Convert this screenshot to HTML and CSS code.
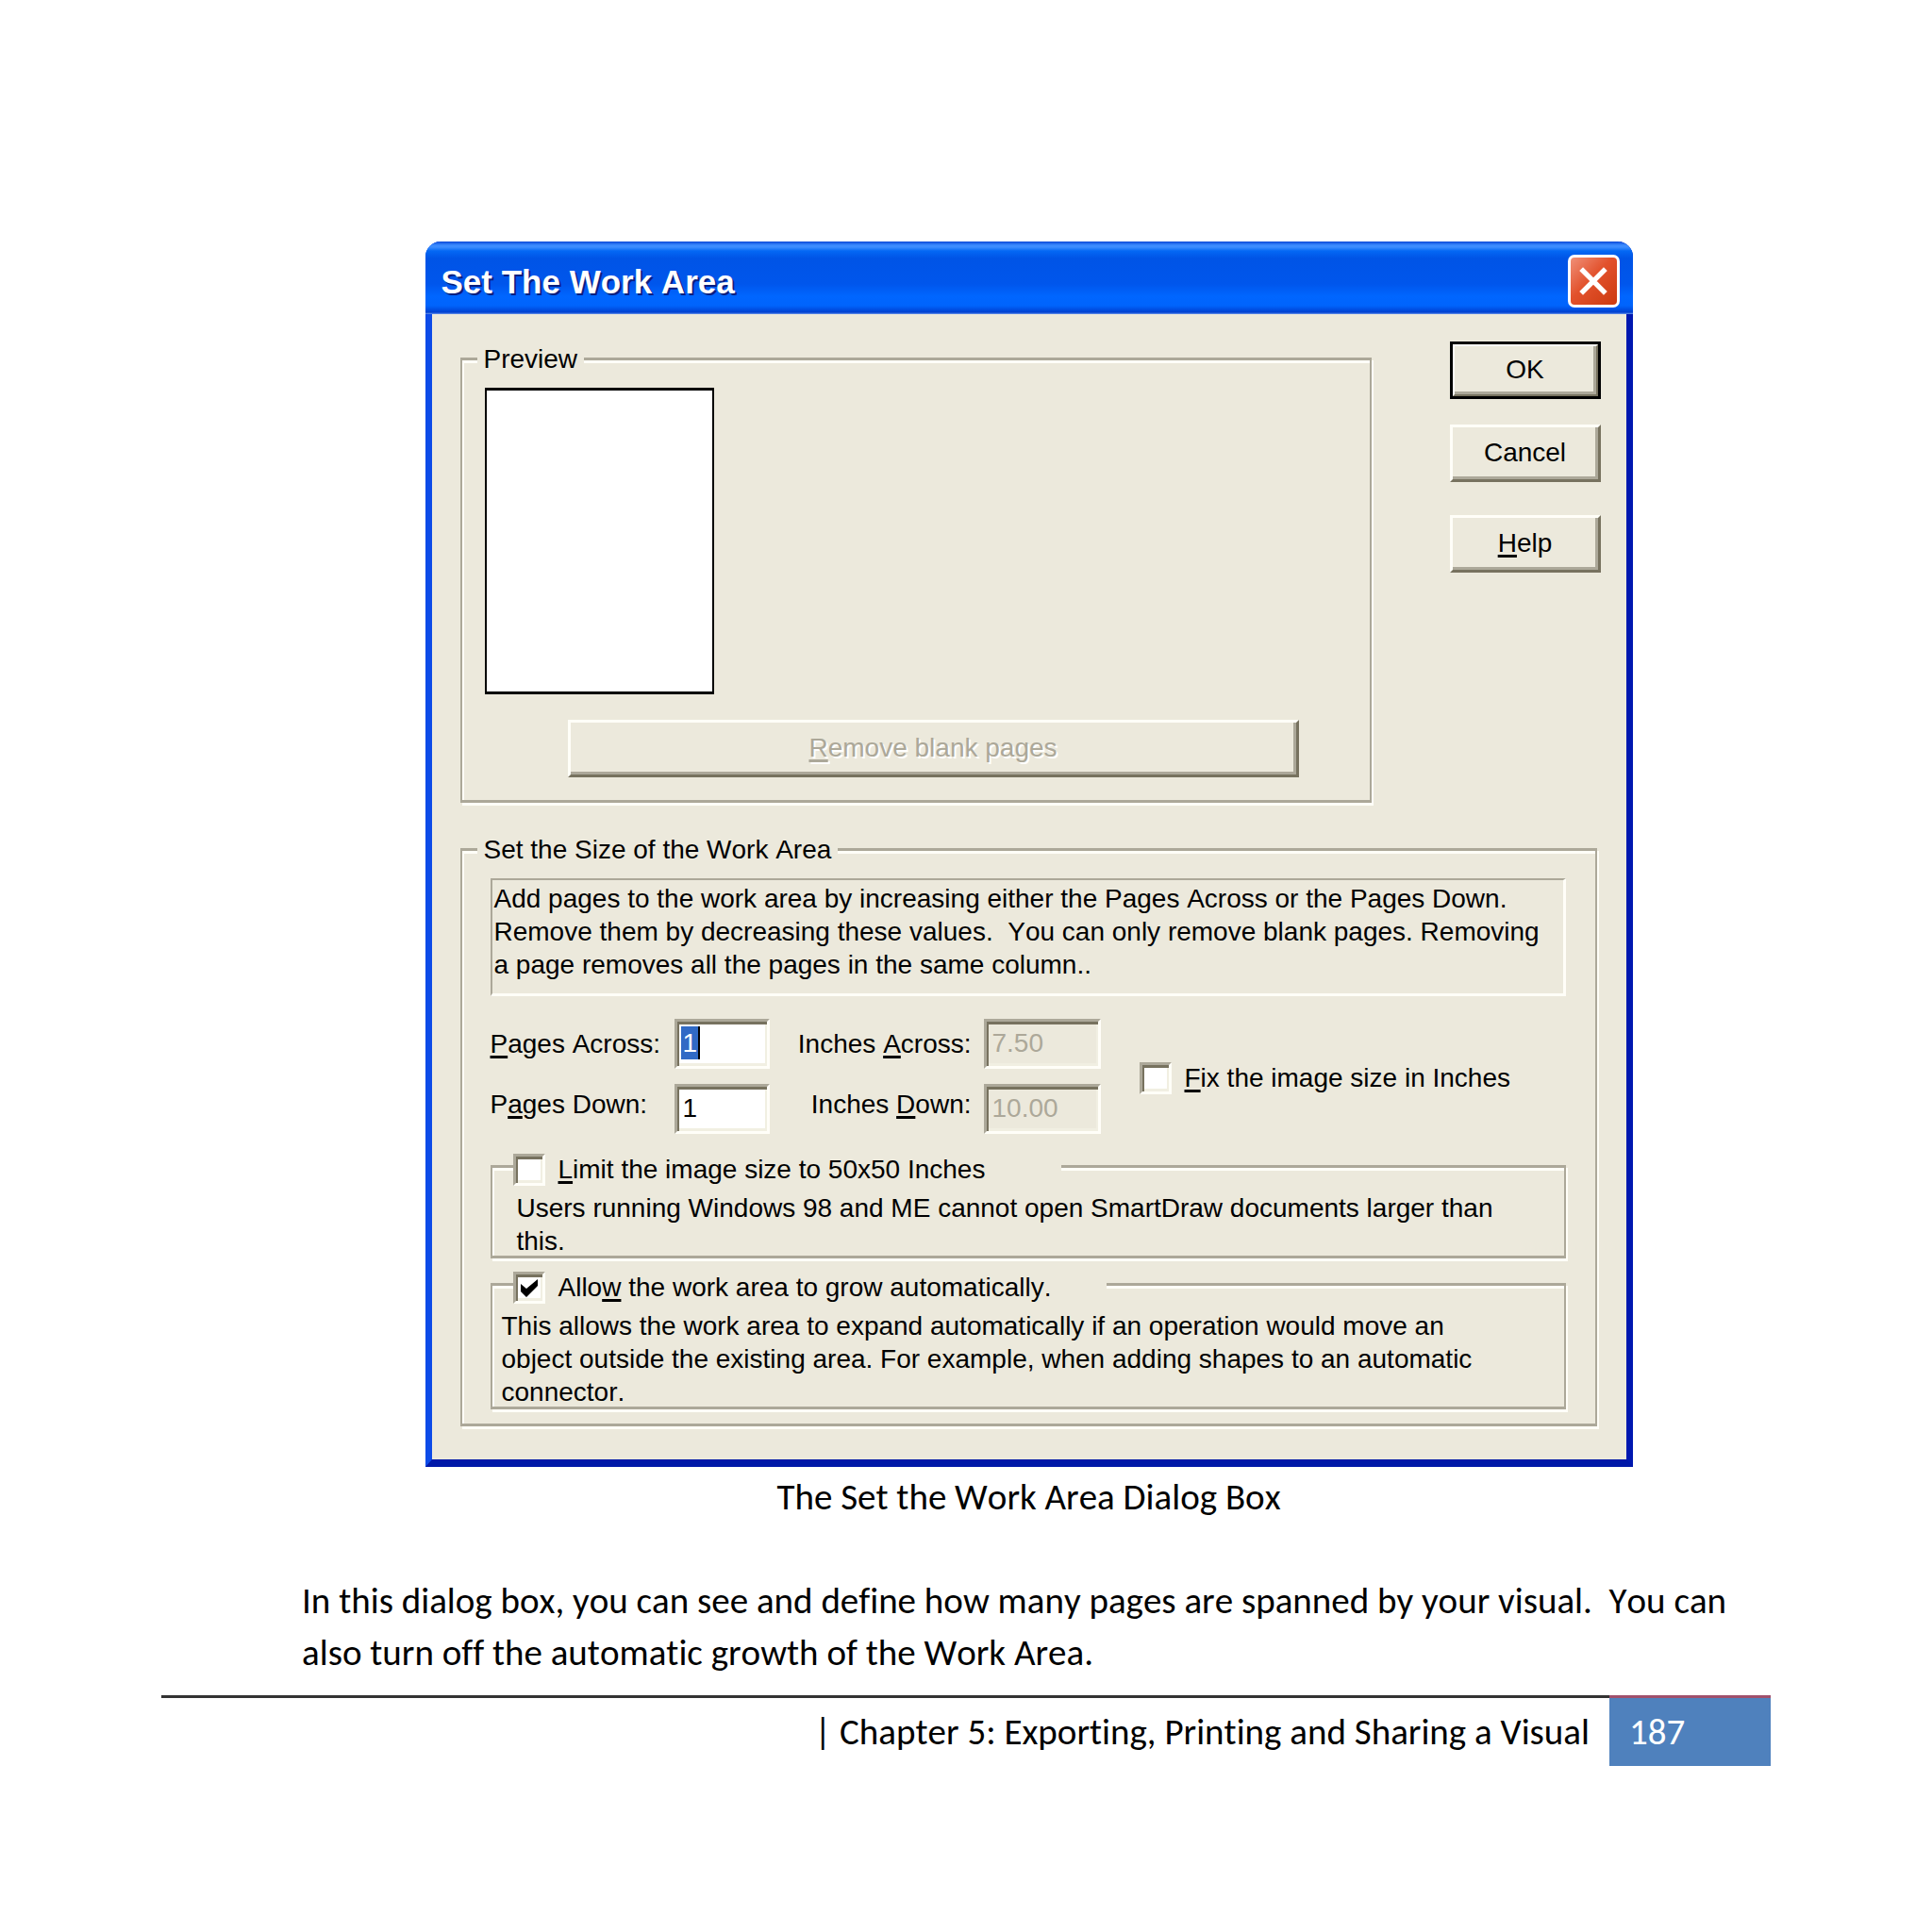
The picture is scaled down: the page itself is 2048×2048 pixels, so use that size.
FILE: index.html
```html
<!DOCTYPE html>
<html lang="en">
<head>
    <meta charset="UTF-8">
    <meta name="viewport" content="width=device-width, initial-scale=1.0">
    <title>Chapter 5: Exporting, Printing and Sharing a Visual</title>
    <link rel="stylesheet" href="styles.css">
</head>
<body>
    <main class="page">
        <figure class="figure">
            <section class="dialog">
                <header class="titlebar">
                    <h1>Set The Work Area</h1>
                    <button class="close" type="button" aria-label="Close">
                        <svg viewBox="0 0 28 28" width="30" height="30"><path d="M2 2L26 26M26 2L2 26" stroke="#fff" stroke-width="5"/></svg>
                    </button>
                </header>

                <form class="content">
                    <div class="top">
                        <fieldset class="group preview">
                            <legend>Preview</legend>
                            <div class="sheet"></div>
                            <button class="btn remove" type="button" disabled><u>R</u>emove blank pages</button>
                        </fieldset>
                        <div class="actions">
                            <button class="btn default" type="button">OK</button>
                            <button class="btn" type="button">Cancel</button>
                            <button class="btn help" type="button"><u>H</u>elp</button>
                        </div>
                    </div>

                    <fieldset class="group size">
                        <legend>Set the Size of the Work Area</legend>
                        <p class="info">Add pages to the work area by increasing either the Pages Across or the Pages Down.<br>Remove them by decreasing these values.&nbsp; You can only remove blank pages. Removing<br>a page removes all the pages in the same column..</p>

                        <div class="fields">
                            <div class="numbers">
                                <label for="pages-across"><u>P</u>ages Across:</label>
                                <input class="selected" id="pages-across" type="text" value="1">
                                <label class="right" for="inches-across">Inches <u>A</u>cross:</label>
                                <input id="inches-across" type="text" value="7.50" disabled>
                                <label class="down" for="pages-down">P<u>a</u>ges Down:</label>
                                <input id="pages-down" type="text" value="1">
                                <label class="right down" for="inches-down">Inches <u>D</u>own:</label>
                                <input id="inches-down" type="text" value="10.00" disabled>
                            </div>
                            <label class="check"><input type="checkbox"><span><u>F</u>ix the image size in Inches</span></label>
                        </div>

                        <fieldset class="group option limit">
                            <legend><label class="check"><input type="checkbox"><span><u>L</u>imit the image size to 50x50 Inches</span></label></legend>
                            <p>Users running Windows 98 and ME cannot open SmartDraw documents larger than<br>this.</p>
                        </fieldset>

                        <fieldset class="group option grow">
                            <legend><label class="check"><input type="checkbox" checked><span>Allo<u>w</u> the work area to grow automatically.</span></label></legend>
                            <p>This allows the work area to expand automatically if an operation would move an<br>object outside the existing area. For example, when adding shapes to an automatic<br>connector.</p>
                        </fieldset>
                    </fieldset>
                </form>
            </section>
            <figcaption>The Set the Work Area Dialog Box</figcaption>
        </figure>

        <p class="text">In this dialog box, you can see and define how many pages are spanned by your visual.&nbsp; You can<br>also turn off the automatic growth of the Work Area.</p>
    </main>

    <footer class="footer">
        <span class="chapter">| Chapter 5: Exporting, Printing and Sharing a Visual</span>
        <span class="number">187</span>
    </footer>
</body>
</html>
```
FILE: styles.css
```css
* {
    box-sizing: border-box;
}

body {
    margin: 0;
    background: #fff;
    color: #000;
    font-family: Calibri, Carlito, Lato, sans-serif;
    font-size: 39px;
    font-variant-ligatures: none;
    font-kerning: none;
    line-height: 55px;
}

h1, p, figure, fieldset, legend {
    margin: 0;
    padding: 0;
}

.page {
    padding: 256px 187px 0 320px;
}

.figure {
    max-width: 1280px;
    margin: 0 auto;
}

.figure figcaption {
    padding-top: 4px;
    text-align: center;
}

.text {
    padding-top: 55px;
    white-space: nowrap;
}

/* Dialog window */
.dialog {
    border: solid;
    border-width: 0 7px 8px;
    border-color: #0d4be8 #0018b0 #0018a8 #0d4be8;
    border-radius: 16px 16px 0 0;
    background: #ece9dc;
    font-family: "Liberation Sans", Arial, sans-serif;
    font-size: 28px;
    line-height: 35px;
    white-space: nowrap;
}

.titlebar {
    display: flex;
    justify-content: space-between;
    align-items: center;
    height: 77px;
    margin: 0 -7px;
    padding: 7px 14px 0 17px;
    border-radius: 16px 16px 0 0;
    background: linear-gradient(#0a48d8 0, #3c8cff 4px, #3c8cff 6px, #0468f4 10px, #0054e6 18px, #0056ec 45px, #0066ff 58px, #0064fc 68px, #0040d0 75px, #6a94ec 77px);
}

.titlebar h1 {
    padding-top: 2px;
    color: #fff;
    font-size: 35px;
    line-height: 40px;
    text-shadow: 2px 2px 0 #0a1f80;
}

.close {
    display: flex;
    align-items: center;
    justify-content: center;
    width: 55px;
    height: 56px;
    padding: 0;
    border: 3px solid #fff;
    border-radius: 7px;
    background: linear-gradient(135deg, #f09078, #e2512c 45%, #cc3a10);
}

.content {
    padding: 29px 27px 35px 30px;
}

.top {
    display: flex;
    gap: 83px;
}

.group {
    min-width: 0;
    border: solid #aca899;
    border-width: 3px 2px;
    box-shadow: 2px 3px 0 #fffef8, inset 2px 3px 0 #fffef8;
}

.group > legend {
    position: relative;
    height: 36px;
    padding: 0 7px;
    line-height: 38px;
    background: #ece9dc;
}

.preview {
    flex: 1;
    padding: 13px 75px 24px 24px;
}

.preview > legend {
    margin-left: -8px;
}

.sheet {
    width: 243px;
    height: 325px;
    border: solid #000;
    border-width: 3px 2px;
    background: #fff;
}

.btn {
    height: 61px;
    padding: 0 0 2px;
    border: 3px solid;
    border-color: #fffef8 #77725f #77725f #fffef8;
    background: #ece9dc;
    box-shadow: inset -3px -3px 0 #aca899;
    color: #000;
    font: inherit;
}

.remove {
    display: block;
    width: calc(100% - 88px);
    margin: 27px 0 0 88px;
    color: #aca899;
    text-shadow: 2px 2px 0 #fff;
}

.actions {
    display: flex;
    flex-direction: column;
    gap: 27px;
    width: 160px;
}

.default {
    outline: 3px solid #000;
    outline-offset: -3px;
    border-width: 5px;
}

.help {
    margin-top: 8px;
}

u {
    text-decoration-thickness: 3px;
    text-underline-offset: 3px;
}

.size {
    margin: 31px 4px 0 0;
    padding: 13px 31px 15px 30px;
}

.size > legend {
    margin-left: -14px;
}

.info {
    height: 125px;
    padding: 2px 0 0 2px;
    border: solid;
    border-width: 2px 3px 3px 2px;
    border-color: #aca899 #fffef8 #fffef8 #aca899;
}

.fields {
    display: flex;
    align-items: center;
    gap: 41px;
    margin: 24px 0 16px;
}

.numbers {
    display: grid;
    grid-template-columns: 195px 101px 227px 124px;
    gap: 16px 0;
    align-items: center;
}

.numbers .right {
    padding-right: 13px;
    text-align: right;
}

/* second row labels sit higher than their boxes */
.numbers .down {
    align-self: start;
    padding-top: 4px;
}

.numbers input {
    width: 100%;
    height: 53px;
    padding: 0 0 2px 6px;
    border: 3px solid;
    border-color: #aca899 #fffef8 #fffef8 #aca899;
    border-radius: 0;
    background: #fff;
    box-shadow: inset 2px 3px 0 #77725f, inset -2px -3px 0 #f1efe2;
    color: #000;
    font: inherit;
}

.numbers input:disabled {
    background: #ece9dc;
    color: #aca899;
}

/* highlighted value with the caret behind it */
.numbers .selected {
    background: linear-gradient(90deg, #316ac5 18px, #000 18px) 4px 5px / 20px 35px no-repeat #fff;
    color: #fff;
}

.check {
    display: flex;
    align-items: center;
    gap: 14px;
    padding-top: 3px;
}

.check input {
    appearance: none;
    flex: none;
    width: 34px;
    height: 34px;
    margin: 0;
    border: 3px solid;
    border-color: #aca899 #fffef8 #fffef8 #aca899;
    background: #fff;
    box-shadow: inset 2px 3px 0 #77725f, inset -2px -3px 0 #f1efe2;
}

.check input:checked {
    background: #fff url("data:image/svg+xml,%3Csvg xmlns='http://www.w3.org/2000/svg' viewBox='0 0 28 28'%3E%3Cpath d='M5 10L11 15L23 5V12L11 24L5 18Z'/%3E%3C/svg%3E") center / 28px 28px no-repeat;
}

.group.option > legend {
    margin-left: 22px;
    padding: 0;
}

.option p {
    margin-bottom: -2px;
    padding-top: 9px;
}

.limit > legend {
    width: 581px;
}

.limit p {
    padding-left: 26px;
}

.grow {
    margin-top: 9px;
}

.grow > legend {
    width: 629px;
}

.grow p {
    padding-left: 10px;
}

/* Page footer */
.footer {
    display: flex;
    margin: 18px 171px 0;
    line-height: 72px;
}

.chapter {
    flex: 1;
    padding-right: 21px;
    border-top: 3px solid #333;
    text-align: right;
}

.number {
    width: 171px;
    padding-left: 21px;
    border-top: 3px solid #a0506c;
    background: #4f81bd;
    color: #fff;
}
```
